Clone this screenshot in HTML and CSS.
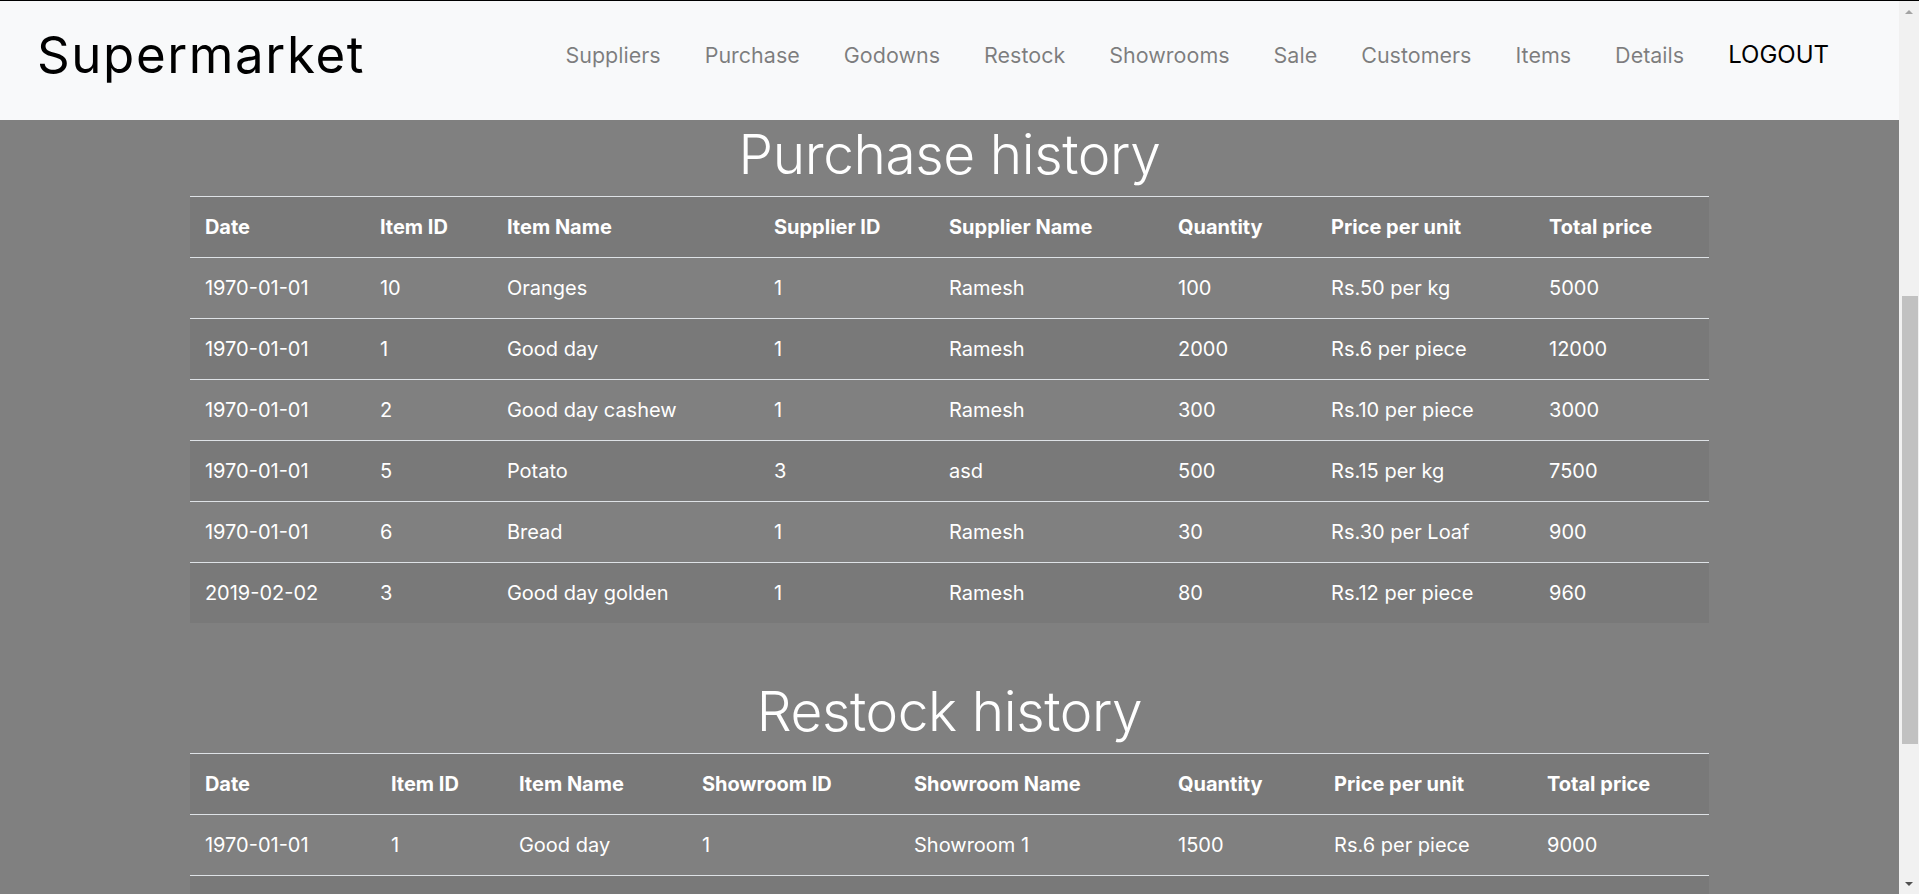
FILE: index.html
```html
<!DOCTYPE html>
<html lang="en">
<head>
<meta charset="utf-8">
<title>Supermarket - History</title>
<link rel="stylesheet" href="styles.css">
</head>
<body>
<div class="frame">
  <div class="viewport">
    <nav class="navbar">
      <a class="brand" href="#">Supermarket</a>
      <ul class="nav">
        <li><a class="nav-link" href="#">Suppliers</a></li>
        <li><a class="nav-link" href="#">Purchase</a></li>
        <li><a class="nav-link" href="#">Godowns</a></li>
        <li><a class="nav-link" href="#">Restock</a></li>
        <li><a class="nav-link" href="#">Showrooms</a></li>
        <li><a class="nav-link" href="#">Sale</a></li>
        <li><a class="nav-link" href="#">Customers</a></li>
        <li><a class="nav-link" href="#">Items</a></li>
        <li><a class="nav-link" href="#">Details</a></li>
        <li><a class="nav-link logout" href="#">LOGOUT</a></li>
      </ul>
    </nav>
    <main class="content">
      <section class="history">
        <h1 class="title">Purchase history</h1>
        <table class="data purchase">
          <tbody>
            <tr><th>Date</th><th>Item ID</th><th>Item Name</th><th>Supplier ID</th><th>Supplier Name</th><th>Quantity</th><th>Price per unit</th><th>Total price</th></tr>
            <tr><td>1970-01-01</td><td>10</td><td>Oranges</td><td>1</td><td>Ramesh</td><td>100</td><td>Rs.50 per kg</td><td>5000</td></tr>
            <tr><td>1970-01-01</td><td>1</td><td>Good day</td><td>1</td><td>Ramesh</td><td>2000</td><td>Rs.6 per piece</td><td>12000</td></tr>
            <tr><td>1970-01-01</td><td>2</td><td>Good day cashew</td><td>1</td><td>Ramesh</td><td>300</td><td>Rs.10 per piece</td><td>3000</td></tr>
            <tr><td>1970-01-01</td><td>5</td><td>Potato</td><td>3</td><td>asd</td><td>500</td><td>Rs.15 per kg</td><td>7500</td></tr>
            <tr><td>1970-01-01</td><td>6</td><td>Bread</td><td>1</td><td>Ramesh</td><td>30</td><td>Rs.30 per Loaf</td><td>900</td></tr>
            <tr><td>2019-02-02</td><td>3</td><td>Good day golden</td><td>1</td><td>Ramesh</td><td>80</td><td>Rs.12 per piece</td><td>960</td></tr>
          </tbody>
        </table>
      </section>
      <section class="history restock">
        <h1 class="title">Restock history</h1>
        <table class="data restock-table">
          <tbody>
            <tr><th>Date</th><th>Item ID</th><th>Item Name</th><th>Showroom ID</th><th>Showroom Name</th><th>Quantity</th><th>Price per unit</th><th>Total price</th></tr>
            <tr><td>1970-01-01</td><td>1</td><td>Good day</td><td>1</td><td>Showroom 1</td><td>1500</td><td>Rs.6 per piece</td><td>9000</td></tr>
            <tr class="below-fold"><td>&nbsp;</td><td></td><td></td><td></td><td></td><td></td><td></td><td></td></tr>
          </tbody>
        </table>
      </section>
    </main>
  </div>
  <div class="scrollbar">
    <span class="arrow up"></span>
    <span class="thumb"></span>
    <span class="track-rest"></span>
    <span class="arrow down"></span>
  </div>
</div>
</body>
</html>
```
FILE: styles.css
```css
html, body {
  margin: 0;
  padding: 0;
  height: 100%;
  overflow: hidden;
}

body {
  font-family: Inter, "Open Sans", "Liberation Sans", sans-serif;
  background: #808080;
}

.frame {
  display: flex;
  height: 100vh;
  border-top: 1px solid #000;
  box-sizing: border-box;
}

.viewport {
  flex: 1;
  display: flex;
  flex-direction: column;
  overflow: hidden;
  min-width: 0;
}

/* navbar */
.navbar {
  flex: 0 0 119px;
  display: flex;
  align-items: center;
  justify-content: space-between;
  background: #f8f9fa;
  padding: 0 70px 12px 37px;
  box-sizing: border-box;
}

.brand {
  font-size: 51px;
  letter-spacing: 1.6px;
  color: #000;
  text-decoration: none;
  line-height: 1;
}

.nav {
  list-style: none;
  margin: 0;
  padding: 0;
  display: flex;
  align-items: center;
  gap: 44px;
}

.nav-link {
  font-size: 21.5px;
  color: rgba(0, 0, 0, 0.5);
  text-decoration: none;
}

.nav-link.logout {
  font-size: 24px;
  color: #000;
}

/* content */
.content {
  flex: 1;
  background: #808080;
  overflow: hidden;
}

.title {
  margin: 1px 0 8px;
  font-size: 55px;
  font-weight: 300;
  line-height: 67px;
  letter-spacing: -0.4px;
  text-align: center;
  color: #fff;
}

.restock {
  margin-top: 55px;
}

.data {
  width: 80%;
  margin: 0 auto;
  border-collapse: collapse;
  table-layout: fixed;
  color: #fff;
}

.data th,
.data td {
  padding: 15px;
  line-height: 30px;
  font-size: 20px;
  text-align: left;
  border-top: 1px solid #dee2e6;
  white-space: nowrap;
}

.data th {
  font-weight: 700;
  font-size: 20px;
  letter-spacing: 0;
}

.data td {
  font-weight: 400;
}

.data tr:nth-child(odd) {
  background: rgba(0, 0, 0, 0.05);
}

.purchase th:nth-child(1) { width: 145px; }
.purchase th:nth-child(2) { width: 97px; }
.purchase th:nth-child(3) { width: 237px; }
.purchase th:nth-child(4) { width: 145px; }
.purchase th:nth-child(5) { width: 199px; }
.purchase th:nth-child(6) { width: 123px; }
.purchase th:nth-child(7) { width: 188px; }
.purchase th:nth-child(8) { width: 145px; }

.restock-table th:nth-child(1) { width: 156px; }
.restock-table th:nth-child(2) { width: 98px; }
.restock-table th:nth-child(3) { width: 153px; }
.restock-table th:nth-child(4) { width: 182px; }
.restock-table th:nth-child(5) { width: 234px; }
.restock-table th:nth-child(6) { width: 126px; }
.restock-table th:nth-child(7) { width: 183px; }
.restock-table th:nth-child(8) { width: 147px; }

/* scrollbar (browser chrome) */
.scrollbar {
  flex: 0 0 20px;
  display: flex;
  flex-direction: column;
  align-items: center;
  background: #f1f1f1;
}

.arrow {
  width: 0;
  height: 0;
  box-sizing: border-box;
}

.arrow.up {
  margin-top: 9px;
  flex: 0 0 0;
  border-left: 4px solid transparent;
  border-right: 4px solid transparent;
  border-bottom: 4px solid #a3a3a3;
}

.arrow.down {
  margin-bottom: 8px;
  flex: 0 0 0;
  border-left: 4px solid transparent;
  border-right: 4px solid transparent;
  border-top: 4px solid #505050;
}

.thumb {
  margin-top: 282px;
  flex: 0 0 448px;
  width: 16px;
  margin-left: 2px;
  background: #c1c1c1;
}

.track-rest {
  flex: 1;
}
```
